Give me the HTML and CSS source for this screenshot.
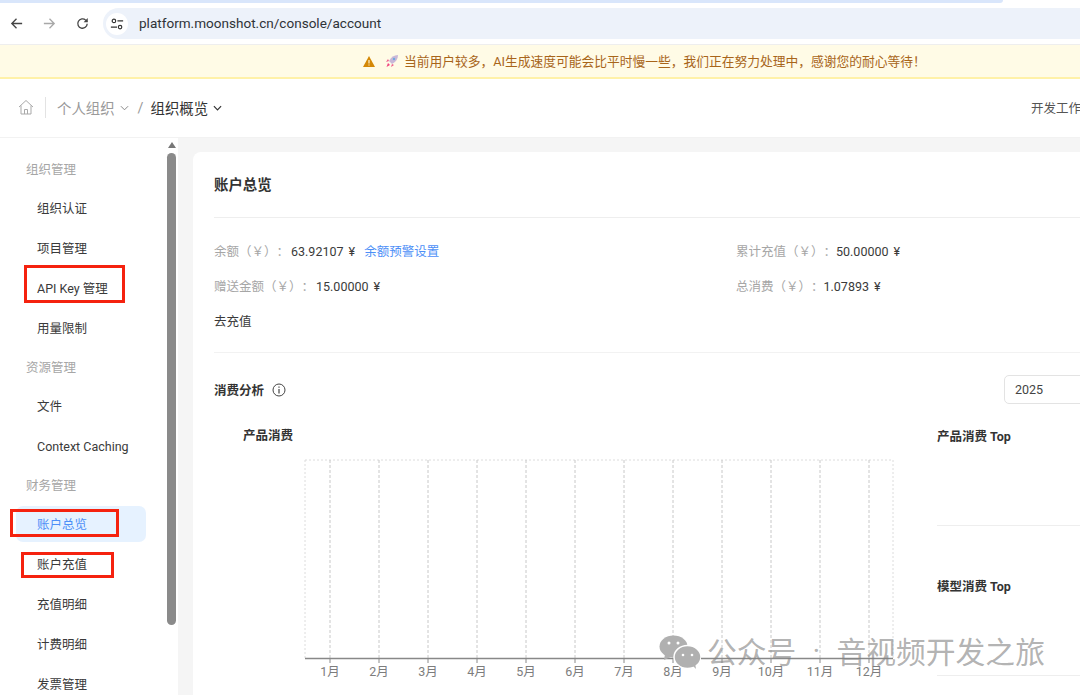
FILE: index.html
```html
<!DOCTYPE html>
<html lang="zh">
<head>
    <meta charset="UTF-8">
    <meta name="viewport" content="width=device-width, initial-scale=1.0">
    <title>账户总览</title>
    <link rel="stylesheet" href="styles.css">
</head>
<body>
    <div class="tab-strip"></div>
    <div class="toolbar">
        <svg class="tool-icon" viewBox="0 0 16 16"><path d="M14 8H3M8 3 3 8l5 5" fill="none" stroke="#444" stroke-width="1.4"/></svg>
        <svg class="tool-icon" viewBox="0 0 16 16"><path d="M2 8h11M8 3l5 5-5 5" fill="none" stroke="#a8a8a8" stroke-width="1.4"/></svg>
        <svg class="tool-icon" viewBox="0 0 16 16"><path d="M13 8.2A5 5 0 1 1 11.4 4.4L13 6" fill="none" stroke="#444" stroke-width="1.4"/><path d="M13.6 2.2v4.4H9.2z" fill="#444"/></svg>
        <div class="address">
            <span class="site-btn">
                <svg viewBox="0 0 16 16" width="14" height="14"><circle cx="4.5" cy="4.5" r="2" fill="none" stroke="#333" stroke-width="1.3"/><path d="M8.5 4.5H15M1 11.500h7" stroke="#333" stroke-width="1.3"/><circle cx="11.500" cy="11.500" r="2" fill="none" stroke="#333" stroke-width="1.3"/></svg>
            </span>
            <span class="url">platform.moonshot.cn/console/account</span>
        </div>
    </div>

    <div class="notice">
        <svg class="warn" viewBox="0 0 12 11"><path d="M6 0 12 11H0z" fill="#d48806"/><path d="M6 4v3.500M6 8.500v1" stroke="#fffbe6" stroke-width="1.100"/></svg>
        <svg class="rocket" viewBox="0 0 14 14"><path d="M13 1C9 1 6 3 4 7l3 3c4-2 6-5 6-9z" fill="#c9b8d8"/><path d="M4 7 1 8l2-3zM7 10l-1 3 3-2z" fill="#ef5a8a"/><path d="M3 9l2 2-3.500 2z" fill="#f0447f"/><circle cx="9" cy="5" r="1.200" fill="#6fa8e0"/></svg>
        <span class="notice-text">当前用户较多，AI生成速度可能会比平时慢一些，我们正在努力处理中，感谢您的耐心等待！</span>
    </div>

    <header class="header">
        <div class="crumbs">
            <svg class="home" viewBox="0 0 16 16"><path d="M1 8 8 1.500 15 8M3 6.500V15h10V6.500M6.500 15v-4.500h3V15" fill="none" stroke="#a9a9a9" stroke-width="1"/></svg>
            <span class="crumb-sep"></span>
            <span class="crumb-org">个人组织</span>
            <svg class="chev" viewBox="0 0 10 6"><path d="M1 1l4 4 4-4" fill="none" stroke="#888" stroke-width="1.100"/></svg>
            <span class="crumb-slash">/</span>
            <span class="crumb-now">组织概览</span>
            <svg class="chev" viewBox="0 0 10 6"><path d="M1 1l4 4 4-4" fill="none" stroke="#333" stroke-width="1.300"/></svg>
        </div>
        <span class="dev-link">开发工作台</span>
    </header>

    <div class="layout">
        <aside class="sidebar">
            <nav class="menu">
                <div class="group">组织管理</div>
                <div class="item">组织认证</div>
                <div class="item">项目管理</div>
                <div class="item">API Key 管理<span class="mark mark-api"></span></div>
                <div class="item">用量限制</div>
                <div class="group">资源管理</div>
                <div class="item">文件</div>
                <div class="item">Context Caching</div>
                <div class="group">财务管理</div>
                <div class="item active">账户总览<span class="mark mark-overview"></span></div>
                <div class="item">账户充值<span class="mark mark-recharge"></span></div>
                <div class="item">充值明细</div>
                <div class="item">计费明细</div>
                <div class="item">发票管理</div>
            </nav>
            <div class="scrollbar">
                <span class="scroll-up"></span>
                <span class="scroll-thumb"></span>
            </div>
        </aside>

        <main class="main">
            <section class="card">
                <h2 class="card-title">账户总览</h2>

                <div class="stats">
                    <div class="stat-row">
                        <div class="stat"><span class="label">余额（￥）：</span><span class="value">63.92107 ¥</span><a class="link">余额预警设置</a></div>
                        <div class="stat"><span class="label">累计充值（￥）：</span><span class="value">50.00000 ¥</span></div>
                    </div>
                    <div class="stat-row">
                        <div class="stat"><span class="label">赠送金额（￥）：</span><span class="value">15.00000 ¥</span></div>
                        <div class="stat"><span class="label">总消费（￥）：</span><span class="value">1.07893 ¥</span></div>
                    </div>
                    <div class="stat-row"><div class="stat value">去充值</div></div>
                </div>

                <div class="analysis-head">
                    <h3 class="analysis-title">消费分析</h3>
                    <svg class="info" viewBox="0 0 14 14"><circle cx="7" cy="7" r="6" fill="none" stroke="#444" stroke-width="1"/><path d="M7 6v4.500M7 3.500v1.200" stroke="#444" stroke-width="1.200"/></svg>
                    <div class="year">2025</div>
                </div>

                <div class="analysis-body">
                    <div class="chart">
                        <h4 class="chart-title">产品消费</h4>
                        <svg class="chart-svg" width="700" height="245" viewBox="0 0 700 245">
                            <path class="grid-edge" d="M91 10H679M91 10V208M679 10V208"/>
                            <path class="grid" d="M116 10V208M165 10V208M214 10V208M263 10V208M312 10V208M361 10V208M410 10V208M459 10V208M508 10V208M557 10V208M606 10V208M655 10V208"/>
                            <path class="axis" d="M91 208.500H679"/>
                            <path class="ticks" d="M116 208V213M165 208V213M214 208V213M263 208V213M312 208V213M361 208V213M410 208V213M459 208V213M508 208V213M557 208V213M606 208V213M655 208V213"/>
                            <g class="months">
                                <text x="116" y="226">1月</text>
                                <text x="165" y="226">2月</text>
                                <text x="214" y="226">3月</text>
                                <text x="263" y="226">4月</text>
                                <text x="312" y="226">5月</text>
                                <text x="361" y="226">6月</text>
                                <text x="410" y="226">7月</text>
                                <text x="459" y="226">8月</text>
                                <text x="508" y="226">9月</text>
                                <text x="557" y="226">10月</text>
                                <text x="606" y="226">11月</text>
                                <text x="655" y="226">12月</text>
                            </g>
                        </svg>
                    </div>
                    <div class="tops">
                        <div class="top-panel"><h4 class="top-title">产品消费 Top</h4></div>
                        <div class="top-panel"><h4 class="top-title">模型消费 Top</h4></div>
                    </div>
                </div>
            </section>
        </main>
    </div>

    <!-- 公众号水印 -->
    <div class="watermark">
        <svg class="wm-logo" viewBox="0 0 42 34">
            <ellipse cx="14.500" cy="11.500" rx="14" ry="11" fill="#b0b0b0"/>
            <path d="M6 19l-1 6 7-3z" fill="#b0b0b0"/>
            <ellipse cx="28.500" cy="22" rx="13.500" ry="11.500" fill="#b0b0b0" stroke="#fff" stroke-width="1.500"/>
            <path d="M34 31l3 3-1-6z" fill="#b0b0b0"/>
            <circle cx="10" cy="8" r="1.500" fill="#fff"/><circle cx="19" cy="8" r="1.500" fill="#fff"/>
            <circle cx="24" cy="20" r="1.300" fill="#fff"/><circle cx="33" cy="20" r="1.300" fill="#fff"/>
        </svg>
        <span>公众号</span><span class="wm-dot">·</span><span>音视频开发之旅</span>
    </div>
</body>
</html>
```

FILE: styles.css
```css
body {
    margin: 0;
    width: 1080px;
    height: 695px;
    overflow: hidden;
    position: relative;
    background-color: #fff;
    font-family: 'Roboto', 'Noto Sans CJK SC', sans-serif;
    font-size: 12.5px;
    color: #333;
    text-spacing-trim: space-all;
}
h2, h3, h4 {
    margin: 0;
}

/* browser chrome */
.tab-strip {
    width: 1003px;
    height: 3px;
    background-color: #d9e6fb;
    border-bottom-right-radius: 5px;
}
.toolbar {
    display: flex;
    align-items: center;
    height: 42px;
    padding-left: 9px;
    box-sizing: border-box;
    border-bottom: 1px solid #eeeeee;
}
.tool-icon {
    width: 15px;
    height: 15px;
    margin-right: 18px;
    flex: none;
}
.address {
    display: flex;
    align-items: center;
    flex: 1;
    height: 31px;
    margin-left: -5px;
    padding-left: 3px;
    background-color: #edf2fa;
    border-radius: 16px 0 0 16px;
}
.site-btn {
    display: flex;
    align-items: center;
    justify-content: center;
    width: 22px;
    height: 22px;
    border-radius: 50%;
    background-color: #fff;
}
.url {
    margin-left: 11px;
    padding-bottom: 2px;
    font-family: 'Roboto', sans-serif;
    font-size: 13.55px;
    color: #2f3338;
}

/* notice */
.notice {
    display: flex;
    align-items: center;
    height: 34px;
    box-sizing: border-box;
    padding-left: 363px;
    background-color: #fffbe6;
    border-bottom: 2px solid #fff1a8;
    color: #a8651a;
    font-size: 12.75px;
}
.notice-text {
    padding-bottom: 2px;
}
.warn {
    width: 12px;
    height: 11px;
    margin-right: 10px;
}
.rocket {
    width: 14px;
    height: 14px;
    margin-right: 5px;
}

/* header */
.header {
    display: flex;
    align-items: center;
    width: 1200px;
    height: 59px;
    box-sizing: border-box;
    padding-bottom: 2px;
    border-bottom: 1px solid #f2f2f2;
}
.crumbs {
    display: flex;
    align-items: center;
    flex: none;
    width: 1031px;
    padding-left: 18px;
    box-sizing: border-box;
    font-size: 14.4px;
}
.home {
    width: 16px;
    height: 16px;
}
.crumb-sep {
    width: 1px;
    height: 21px;
    margin: 0 11px;
    background-color: #e3e3e3;
}
.crumb-org {
    color: #9a9a9a;
}
.chev {
    width: 9px;
    height: 6px;
    margin-left: 5px;
    margin-top: 2px;
}
.crumb-slash {
    margin: 2px 7px 0 9px;
    color: #999;
}
.crumb-now {
    color: #333;
}
.dev-link {
    flex: none;
    color: #555;
    font-size: 12.5px;
}

/* sidebar */
.layout {
    display: flex;
    height: 558px;
    overflow: hidden;
}
.sidebar {
    display: flex;
    flex: none;
    width: 178px;
    background-color: #fff;
}
.menu {
    display: flex;
    flex-direction: column;
    flex: none;
    width: 165px;
    padding-top: 12px;
}
.group {
    flex: none;
    height: 38px;
    line-height: 40px;
    padding-left: 26px;
    color: #a6a6a6;
}
.item {
    position: relative;
    flex: none;
    height: 36px;
    line-height: 38px;
    margin: 2px 19px 2px 16px;
    padding-left: 21px;
    border-radius: 7px;
    color: #3a3a3a;
    white-space: nowrap;
}
.item.active {
    background-color: #e6f2ff;
    color: #4d8ff7;
}
.mark {
    position: absolute;
    box-sizing: border-box;
    border: 3px solid #f5220f;
}
.mark-api {
    left: 8px;
    top: -5px;
    width: 101px;
    height: 38px;
}
.mark-overview {
    left: -6px;
    top: 3px;
    width: 109px;
    height: 28px;
}
.mark-recharge {
    left: 5px;
    top: 6px;
    width: 93px;
    height: 26px;
}
.scrollbar {
    display: flex;
    flex-direction: column;
    align-items: center;
    width: 9px;
    margin-left: 2px;
}
.scroll-up {
    width: 0;
    height: 0;
    margin-top: 4px;
    border-left: 4px solid transparent;
    border-right: 4px solid transparent;
    border-bottom: 6px solid #777;
}
.scroll-thumb {
    width: 9px;
    height: 472px;
    margin-top: 5px;
    border-radius: 5px;
    background-color: #8a8a8a;
}

/* main */
.main {
    flex: 1;
    padding: 14px 0 0 15px;
    background-color: #f5f5f5;
}
.card {
    width: 1000px;
    height: 700px;
    box-sizing: border-box;
    padding-left: 21px;
    background-color: #fff;
    border-radius: 8px;
}
.card-title {
    height: 65px;
    line-height: 67px;
    font-size: 14.4px;
    font-weight: 700;
    color: #333;
    border-bottom: 1px solid #eeeeee;
}
.stats {
    padding: 15px 0 14px;
    border-bottom: 1px solid #f2f2f2;
}
.stat-row {
    display: flex;
    height: 35px;
    align-items: center;
}
.stat {
    width: 522px;
    flex: none;
    white-space: nowrap;
}
.stat:first-child .label {
    margin-right: 2px;
}
.label {
    color: #a6a6a6;
}
.value {
    color: #3a3a3a;
    word-spacing: 2px;
}
.link {
    margin-left: 9px;
    color: #4d8ff7;
}
.analysis-head {
    display: flex;
    align-items: center;
    height: 29px;
    margin-top: 22px;
}
.analysis-title {
    font-size: 12.5px;
    font-weight: 700;
    color: #333;
}
.info {
    width: 14px;
    height: 14px;
    margin-left: 8px;
}
.year {
    display: flex;
    align-items: center;
    width: 120px;
    height: 29px;
    box-sizing: border-box;
    margin-left: 718px;
    padding-left: 10px;
    border: 1px solid #e3e3e3;
    border-radius: 5px;
    color: #444;
}
.analysis-body {
    display: flex;
    margin-top: 21px;
}
.chart {
    flex: none;
    width: 723px;
}
.chart-title {
    height: 25px;
    line-height: 22px;
    padding-left: 29px;
    font-size: 12.5px;
    font-weight: 700;
    color: #333;
}
.chart-svg {
    display: block;
}
.grid {
    fill: none;
    stroke: #c8c8c8;
    stroke-width: 1;
    stroke-dasharray: 3 2;
}
.grid-edge {
    fill: none;
    stroke: #dcdcdc;
    stroke-width: 1;
    stroke-dasharray: 2 2;
}
.axis {
    fill: none;
    stroke: #888;
    stroke-width: 1.5;
}
.ticks {
    fill: none;
    stroke: #8a8a8a;
    stroke-width: 1;
}
.months text {
    text-anchor: middle;
    font-size: 12.5px;
    fill: #7d7d7d;
}
.tops {
    flex: none;
    width: 200px;
}
.top-panel {
    height: 101px;
    box-sizing: border-box;
    margin-bottom: 49px;
    border-bottom: 1px solid #eeeeee;
}
.top-title {
    line-height: 23px;
    font-size: 12.5px;
    font-weight: 700;
    color: #333;
}

/* watermark over the page */
.watermark {
    position: absolute;
    left: 659px;
    top: 631px;
    display: flex;
    align-items: center;
    height: 38px;
    font-size: 29.8px;
    color: rgba(130, 130, 130, 0.62);
    white-space: nowrap;
}
.wm-logo {
    width: 42px;
    height: 34px;
    margin-top: 3px;
    margin-right: 6px;
}
.wm-dot {
    width: 40px;
    text-align: center;
}
```
